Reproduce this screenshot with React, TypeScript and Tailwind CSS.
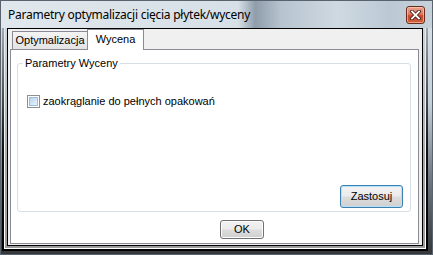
import React from 'react';

const FONT = "font-['Liberation_Sans',Arial,sans-serif]";

function CloseButton() {
  return (
    <div className="w-[19px] h-[18px] rounded-[3px] border border-[#6b2a1c] shadow-[inset_0_0_0_1px_rgba(255,220,200,0.55)] bg-[linear-gradient(to_bottom,#eaa28f_0%,#dc7a60_45%,#c9482a_55%,#d0603f_100%)] flex items-center justify-center">
      <svg width="11" height="10" viewBox="0 0 11 10">
        <path d="M2 1.5 L9 8.5 M9 1.5 L2 8.5" stroke="#4a1d12" strokeWidth="3.6" strokeLinecap="square" />
        <path d="M2 1.5 L9 8.5 M9 1.5 L2 8.5" stroke="#ffffff" strokeWidth="1.8" strokeLinecap="square" />
      </svg>
    </div>
  );
}

function TitleBar() {
  return (
    <div className="h-[27px] shrink-0 flex items-start justify-between pl-[7px] pr-[7px] pt-[5px] bg-[linear-gradient(to_right,#e0e7ed_0%,#d7e0e7_55%,#8f9dac_59%,#b7c4cf_65%,#cfd9e1_78%,#bcc9d4_90%,#c6d1da_100%)]">
      <span className="text-[12px] leading-[17px] text-black font-['Noto_Sans','Liberation_Sans',sans-serif] tracking-[-0.25px]">
        Parametry optymalizacji cięcia płytek/wyceny
      </span>
      <CloseButton />
    </div>
  );
}

function Tabs() {
  return (
    <div className="h-[20px] shrink-0 flex items-end pl-[2px] relative z-10">
      <div className="w-[75px] h-[18px] border-l border-t border-[#898c95] bg-[linear-gradient(to_bottom,#f4f4f4,#e3e3e3)] flex items-center justify-center text-[11px] leading-none">
        Optymalizacja
      </div>
      <div className="w-[57px] h-[21px] -mb-px border-x border-t border-[#898c95] bg-white flex items-start justify-center pt-[4px] text-[11px] leading-none">
        Wycena
      </div>
    </div>
  );
}

function Checkbox() {
  return (
    <div className="w-[13px] h-[13px] shrink-0 border border-[#8e8f8f] bg-white p-px">
      <div className="w-full h-full border border-[#9fbcd8] bg-[linear-gradient(135deg,#b9d4ee,#e8f3fc)]" />
    </div>
  );
}

export default function App() {
  return (
    <div className={`w-[433px] h-[255px] overflow-hidden ${FONT} text-black`}>
      <div className="w-[433px] h-[255px] flex flex-col border border-[#58636e] bg-[linear-gradient(to_bottom,#dbe3ea_0%,#c6d0d9_40%,#6f7983_70%,#34373a_100%)]">
        <TitleBar />

        {/* window frame, drawn as nested bands */}
        <div className="flex-1 ml-px mr-[4px] mb-[3px] flex flex-col px-[2px] pb-[2px] bg-[linear-gradient(to_bottom,rgba(60,66,72,0.35)_0%,#111_55%,#000_100%)]">
          <div className="flex-1 flex flex-col px-px pb-px bg-[linear-gradient(to_bottom,#e4eaef,#ffffff)]">
            <div className="flex-1 flex flex-col px-[2px] pb-[2px] bg-[linear-gradient(to_bottom,#cdd6de_0%,#a8a8a8_60%,#9c9c9c_100%)]">
              <div className="flex-1 flex flex-col border border-black bg-[#f0f0f0]">
                <div className="flex-1 flex flex-col ml-[2px] mr-[3px] mb-px">
                  <Tabs />
                  <div className="flex-1 flex flex-col border border-[#898c95] bg-white">
                    <div className="relative mt-[13px] ml-[6px] mr-[7px] h-[149px] flex flex-col border border-[#d5dfe5] rounded-[3px] pl-[9px] pr-[7px] pb-[3px]">
                      <span className="absolute -top-[7px] left-[5px] px-[2px] bg-white text-[11px] leading-[13px]">
                        Parametry Wyceny
                      </span>
                      <label className="mt-[31px] flex items-center gap-[3px] text-[11px] leading-[13px]">
                        <Checkbox />
                        <span>zaokrąglanie do pełnych opakowań</span>
                      </label>
                      <button className="mt-auto self-end w-[63px] h-[23px] rounded-[3px] border border-[#3c7fb1] shadow-[inset_0_0_0_1px_#b5e2f9] bg-[linear-gradient(to_bottom,#f3f3f3_0%,#ebebeb_48%,#dddddd_52%,#cfcfcf_100%)] text-[11px] leading-none">
                        Zastosuj
                      </button>
                    </div>
                    <button className="mt-[8px] ml-[209px] w-[44px] h-[19px] rounded-[3px] border border-[#707070] shadow-[inset_0_0_0_1px_#fcfcfc] bg-[linear-gradient(to_bottom,#f2f2f2_0%,#ebebeb_48%,#dddddd_52%,#cfcfcf_100%)] text-[11px] leading-none">
                      OK
                    </button>
                  </div>
                </div>
              </div>
            </div>
          </div>
        </div>
      </div>
    </div>
  );
}
